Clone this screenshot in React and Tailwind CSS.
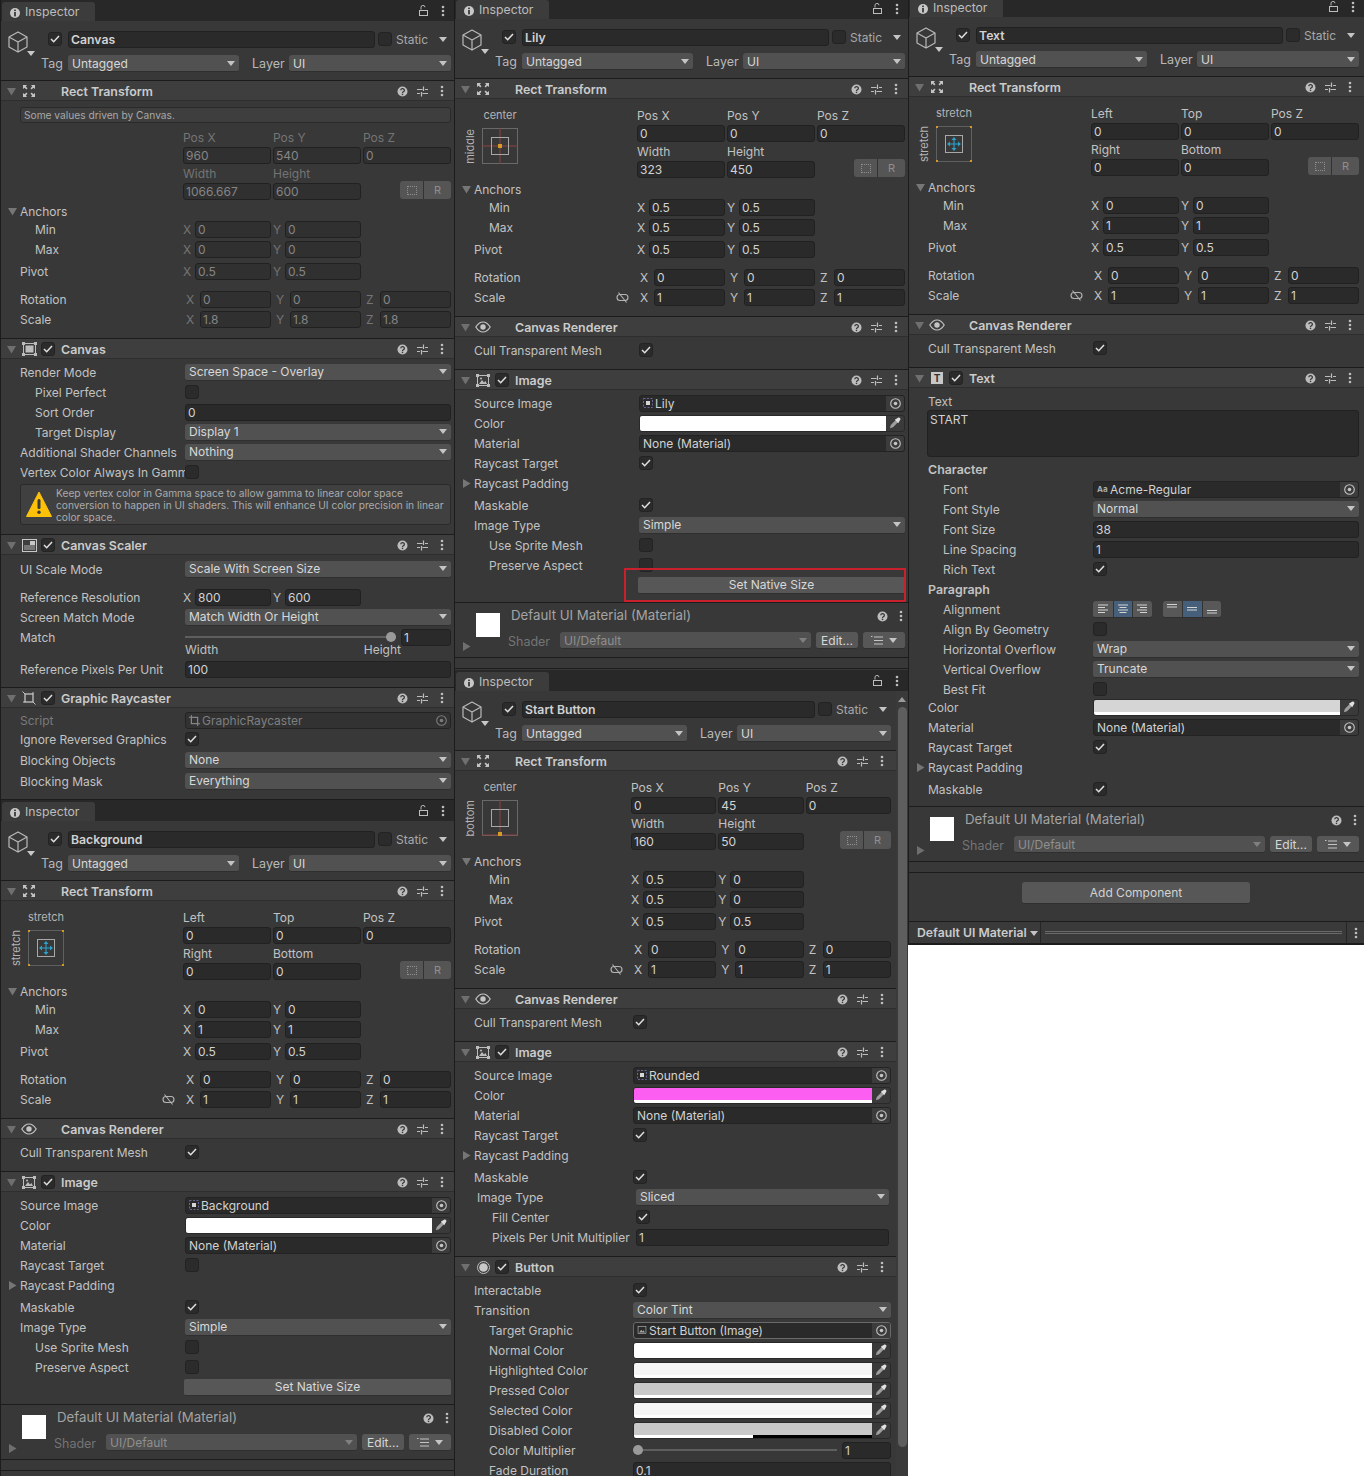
import { createContext, useContext } from "react";

const Ctx = createContext({ lw: "w-[165px]", pr: "pr-[3px]", nameW: "w-[171px]" });
const wide = { lw: "w-[165px]", pr: "pr-[3px]", nameW: "w-[171px]" };
const wideR = { lw: "w-[165px]", pr: "pr-[5px]", nameW: "w-[171px]" };
const narrow = { lw: "w-[159px]", pr: "pr-[5px]", nameW: "w-[165px]" };

const ic = "#bdbdbd";

// ---- icons
function Tri({ down = true, c = "#6f6f6f" }) {
  return (
    <svg width="9" height="9" viewBox="0 0 9 9" className="shrink-0">
      {down ? <polygon points="0,1 9,1 4.5,8.5" fill={c} /> : <polygon points="1,0 8.5,4.5 1,9" fill={c} />}
    </svg>
  );
}
function Arrow({ c = "#c4c4c4" }) {
  return (
    <svg width="8" height="5" viewBox="0 0 8 5" className="shrink-0">
      <polygon points="0,0 8,0 4,5" fill={c} />
    </svg>
  );
}
function Dots() {
  return (
    <svg width="4" height="12" viewBox="0 0 4 12">
      <circle cx="2" cy="2" r="1.3" fill={ic} />
      <circle cx="2" cy="6" r="1.3" fill={ic} />
      <circle cx="2" cy="10" r="1.3" fill={ic} />
    </svg>
  );
}
function Help() {
  return (
    <svg width="11" height="11" viewBox="0 0 11 11">
      <circle cx="5.5" cy="5.5" r="5" fill={ic} />
      <path d="M3.8 4.3a1.8 1.6 0 1 1 2.6 1.4c-.6.4-.9.6-.9 1.2" stroke="#383838" strokeWidth="1.3" fill="none" />
      <rect x="4.8" y="7.7" width="1.4" height="1.4" fill="#383838" />
    </svg>
  );
}
function Sliders() {
  return (
    <svg width="11" height="11" viewBox="0 0 11 11">
      <path d="M0 3.5h5.500M8 3.500h3M0 7.500h3M5.500 7.500h5.500M6.500 .5v4.500M4.500 6v4.500" stroke={ic} strokeWidth="1.200" fill="none" />
    </svg>
  );
}
function Info() {
  return (
    <svg width="10" height="10" viewBox="0 0 10 10" className="shrink-0">
      <circle cx="5" cy="5" r="5" fill="#c8c8c8" />
      <rect x="4.2" y="1.6" width="1.6" height="1.5" fill="#282828" />
      <rect x="4.2" y="4" width="1.6" height="4.4" fill="#282828" />
    </svg>
  );
}
function Lock() {
  return (
    <svg width="9" height="11" viewBox="0 0 9 11">
      <path d="M2 4.5V2.6a2 2 0 0 1 4-.4" stroke={ic} fill="none" />
      <rect x=".5" y="5.5" width="8" height="5" stroke={ic} fill="none" />
    </svg>
  );
}
function Cube() {
  return (
    <div className="relative w-[20px] h-[22px]">
      <svg width="20" height="22" viewBox="0 0 20 22">
        <path d="M10 1 19 6v10l-9 5-9-5V6zM1 6l9 5 9-5M10 11v10" stroke="#b9b9b9" strokeWidth="1.2" fill="none" strokeLinejoin="round" />
      </svg>
      <div className="absolute left-[19px] top-[20px]">
        <Arrow c="#c8c8c8" />
      </div>
    </div>
  );
}
function RectIcon() {
  return (
    <svg width="14" height="14" viewBox="0 0 14 14">
      <path d="M1 1h4L3.8 2.6 5.5 4.3 4.3 5.5 2.6 3.8 1 5zM13 1H9l1.2 1.6-1.700 1.700 1.200 1.200 1.700-1.700L13 5zM1 13h4l-1.200-1.600 1.700-1.700-1.200-1.200-1.700 1.700L1 9zM13 13H9l1.200-1.600-1.700-1.700 1.200-1.200 1.700 1.700L13 9z" fill="#c4c4c4" />
    </svg>
  );
}
function CanvasIcon() {
  return (
    <svg width="15" height="14" viewBox="0 0 15 14">
      <rect x="1.500" y="1.500" width="12" height="11" stroke="#bdbdbd" fill="none" />
      <rect x="3.500" y="3.500" width="8" height="7" fill="#bdbdbd" />
      <path d="M0 0h3v3H0zM12 0h3v3h-3zM0 11h3v3H0zM12 11h3v3h-3z" fill="#bdbdbd" />
    </svg>
  );
}
function ScalerIcon() {
  return (
    <svg width="15" height="13" viewBox="0 0 15 13">
      <rect x=".5" y=".5" width="14" height="12" stroke="#c8c8c8" fill="none" />
      <rect x="8" y="2" width="5" height="4" fill="#c8c8c8" />
      <rect x="2" y="6" width="11" height="5" fill="#777" />
    </svg>
  );
}
function RaycastIcon() {
  return (
    <svg width="14" height="14" viewBox="0 0 14 14">
      <rect x="3" y="3" width="8" height="8" stroke="#c4c4c4" strokeWidth="1.300" fill="none" />
      <path d="M.5 .5 3 3M11 11l2.500 2.500M11 1v2M1 11h2" stroke="#c4c4c4" fill="none" />
    </svg>
  );
}
function EyeIcon() {
  return (
    <svg width="16" height="12" viewBox="0 0 16 12">
      <path d="M.8 6C3 2.500 5.500 1 8 1s5 1.500 7.200 5C13 9.500 10.500 11 8 11S3 9.500.8 6z" stroke="#c4c4c4" strokeWidth="1.200" fill="none" />
      <circle cx="8" cy="6" r="2.700" fill="#c4c4c4" />
    </svg>
  );
}
function ImageIcon() {
  return (
    <svg width="14" height="13" viewBox="0 0 14 13">
      <rect x="1.500" y="1.500" width="11" height="10" stroke="#bdbdbd" fill="none" />
      <path d="M0 0h3v3H0zM11 0h3v3h-3zM0 10h3v3H0zM11 10h3v3h-3z" fill="#bdbdbd" />
      <path d="M3 10 6 6l2 2.500L9.500 7 11 10z" fill="#bdbdbd" />
      <circle cx="5" cy="4.500" r="1" fill="#bdbdbd" />
    </svg>
  );
}
function ButtonIcon() {
  return (
    <svg width="13" height="13" viewBox="0 0 13 13">
      <circle cx="6.500" cy="6.500" r="6" stroke="#bdbdbd" fill="none" />
      <circle cx="6.500" cy="6.500" r="4.300" fill="#c8c8c8" />
    </svg>
  );
}
function TextIcon() {
  return (
    <div className="w-[12px] h-[12px] bg-[#c8c8c8] text-[#333] text-[10px] font-bold leading-[12px] text-center">T</div>
  );
}
function Target() {
  return (
    <svg width="11" height="11" viewBox="0 0 11 11">
      <circle cx="5.500" cy="5.500" r="4.800" stroke="#c4c4c4" strokeWidth="1.100" fill="none" />
      <circle cx="5.500" cy="5.500" r="1.800" fill="#c4c4c4" />
    </svg>
  );
}
function Dropper() {
  return (
    <svg width="12" height="12" viewBox="0 0 12 12">
      <path d="M.8 11.200l1-3.200 4.700-4.700 2.200 2.200-4.700 4.700z" fill="#9e9e9e" />
      <path d="M5.800 2.800 9 .8c.7-.5 1.500-.4 2 .2s.6 1.300.1 2L9.200 6.200z" fill="#e0e0e0" />
    </svg>
  );
}
function Unlink() {
  return (
    <svg width="13" height="11" viewBox="0 0 13 11">
      <rect x="1" y="2.500" width="11" height="6" rx="3" stroke="#b4b4b4" strokeWidth="1.100" fill="none" />
      <path d="M2.500 .5l8 10" stroke="#b4b4b4" strokeWidth="1.100" fill="none" />
    </svg>
  );
}
function SpriteIcon() {
  return (
    <svg width="10" height="10" viewBox="0 0 10 10" className="shrink-0">
      <rect x=".5" y=".5" width="9" height="9" stroke="#6a6598" strokeDasharray="2 1.500" fill="none" />
      <rect x="3" y="3" width="4" height="4" fill="#d6d6d6" />
    </svg>
  );
}
function SmallRaycast() {
  return (
    <svg width="11" height="11" viewBox="0 0 14 14" className="shrink-0">
      <rect x="3" y="3" width="8" height="8" stroke="#8a8a8a" strokeWidth="1.500" fill="none" />
      <path d="M3 0v3M0 3h3M11 11v3M11 11h3" stroke="#8a8a8a" strokeWidth="1.300" fill="none" />
    </svg>
  );
}
function MiniImage() {
  return (
    <svg width="10" height="10" viewBox="0 0 14 13" className="shrink-0">
      <rect x="1.500" y="1.500" width="11" height="10" stroke="#a8a8a8" fill="none" />
      <path d="M3 10 6 6l2 2.500L9.500 7 11 10z" fill="#a8a8a8" />
    </svg>
  );
}
function ListIcon() {
  return (
    <svg width="12" height="9" viewBox="0 0 12 9">
      <path d="M3 1h9M3 4.500h9M3 8h9M0 .5h1.500" stroke="#c4c4c4" fill="none" />
    </svg>
  );
}
function Warn() {
  return (
    <svg width="26" height="27" viewBox="0 0 26 27" className="shrink-0">
      <path d="M13 1 25.500 25.500H.5z" fill="#fdc10a" stroke="#fdc10a" strokeLinejoin="round" />
      <rect x="11.500" y="8" width="3" height="10" rx="1.500" fill="#3a3a3a" />
      <circle cx="13" cy="21.300" r="1.700" fill="#3a3a3a" />
    </svg>
  );
}

// ---- controls
function Check({ on }) {
  return (
    <div className="w-[14px] h-[14px] shrink-0 rounded-[3px] bg-[#2b2b2b] border border-[#232323] flex items-center justify-center">
      {on && (
        <svg width="10" height="8" viewBox="0 0 10 8">
          <path d="M1 4l2.700 2.700L9 1" stroke="#e0e0e0" strokeWidth="1.500" fill="none" />
        </svg>
      )}
    </div>
  );
}
function Field({ children, dim, bold, className = "" }) {
  return (
    <div className={`h-[17px] rounded-[3px] bg-[#2a2a2a] border border-[#212121] pl-[2px] flex items-center overflow-hidden ${dim ? "text-[#858585] bg-[#303030]" : "text-[#d2d2d2]"} ${bold ? "font-semibold text-[12.25px] pt-[2px]" : "pt-px"} ${className}`}>
      {children}
    </div>
  );
}
function Dropdown({ children, dim, className = "flex-1" }) {
  return (
    <div className={`h-[17px] rounded-[3px] bg-[#515151] border-b border-[#2f2f2f] pl-[4px] pr-[4px] flex items-center justify-between ${dim ? "text-[#8f8f8f] bg-[#484848]" : "text-[#d8d8d8]"} ${className}`}>
      <span className="pt-px">{children}</span>
      <Arrow c={dim ? "#7f7f7f" : "#c4c4c4"} />
    </div>
  );
}
function ObjectField({ icon, children, dim, lightBorder }) {
  return (
    <div className={`flex-1 h-[17px] rounded-[3px] bg-[#2a2a2a] border ${lightBorder ? "border-[#6a6a6a]" : "border-[#232323]"} flex items-center overflow-hidden ${dim ? "text-[#7f7f7f] bg-[#323232]" : "text-[#d2d2d2]"}`}>
      <div className="flex-1 flex items-center gap-[2px] pl-[3px]">
        {icon}
        <span className="pt-px">{children}</span>
      </div>
      <div className={`w-[18px] h-full flex items-center justify-center ${dim ? "opacity-50" : "bg-[#3c3c3c]"}`}>
        <Target />
      </div>
    </div>
  );
}
function ColorField({ bar = "bg-white", strip = "white" }) {
  return (
    <div className="flex-1 h-[17px] rounded-[3px] border border-[#292929] flex overflow-hidden bg-[#3a3a3a]">
      <div className="flex-1 flex flex-col">
        <div className={`flex-1 ${bar}`}></div>
        {strip === "half" ? (
          <div className="h-[3px] flex">
            <div className="w-1/2 bg-white"></div>
            <div className="w-1/2 bg-black"></div>
          </div>
        ) : (
          <div className="h-[3px] bg-white"></div>
        )}
      </div>
      <div className="w-[18px] flex items-center justify-center">
        <Dropper />
      </div>
    </div>
  );
}
function Slider({ right, value, wClass }) {
  return (
    <div className="flex-1 flex items-center gap-[5px]">
      <div className="flex-1 h-[12px] relative flex items-center">
        <div className="w-full h-[2px] bg-[#5e5e5e]"></div>
        <div className={`absolute top-[1px] w-[10px] h-[10px] rounded-full bg-[#9a9a9a] ${right ? "right-0" : "left-0"}`}></div>
      </div>
      <Field className={wClass}>{value}</Field>
    </div>
  );
}

// ---- rows
function Row({ label, indent, fold, dim, extra, h = "h-5", className = "", children }) {
  const { lw, pr } = useContext(Ctx);
  return (
    <div className={`${h} flex items-center pl-[19px] ${pr} ${className}`}>
      {fold && (
        <div className="-ml-[12px] w-[12px]">
          <Tri down={fold === "down"} c="#767676" />
        </div>
      )}
      <div className={`${lw} h-full shrink-0 flex items-center justify-between overflow-hidden ${dim ? "text-[#7a7a7a]" : "text-[#c2c2c2]"} ${indent ? "pl-[15px]" : ""}`}>
        <span className="pt-px">{label}</span>
        {extra}
      </div>
      <div className="flex-1 flex items-center min-w-0">{children}</div>
    </div>
  );
}
function Xy({ dim, x, y }) {
  return (
    <div className="grid grid-cols-3 gap-[2px] -ml-[2px] w-[calc(100%+2px)]">
      {[["X", x], ["Y", y]].map(([l, v]) => (
        <div key={l} className="flex items-center">
          <span className={`w-[12px] pt-px shrink-0 ${dim ? "text-[#747474]" : "text-[#c2c2c2]"}`}>{l}</span>
          <Field dim={dim} className="flex-1">{v}</Field>
        </div>
      ))}
    </div>
  );
}
function Xyz({ dim, v }) {
  return (
    <div className="grid grid-cols-3 gap-[5px] pl-px w-full">
      {["X", "Y", "Z"].map((l) => (
        <div key={l} className="flex items-center">
          <span className={`w-[14px] pt-px shrink-0 ${dim ? "text-[#747474]" : "text-[#c2c2c2]"}`}>{l}</span>
          <Field dim={dim} className="flex-1">{v}</Field>
        </div>
      ))}
    </div>
  );
}
function Section({ icon, check, title, children }) {
  const { pr } = useContext(Ctx);
  return (
    <div>
      <div className="h-px bg-[#1c1c1c]"></div>
      <div className={`h-5 bg-[#3e3e3e] border-b border-[#2e2e2e] flex items-center pl-[6px] pt-px ${pr}`}>
        <div className="w-[9px]"><Tri /></div>
        <div className="w-[16px] ml-[5px] flex justify-center">{icon}</div>
        <div className="w-[14px] ml-[4px]">{check !== undefined && <Check on={check} />}</div>
        <div className="ml-[6px] pt-[2px] flex-1 font-semibold text-[12.4px] text-[#cbcbcb]">{title}</div>
        <div className="flex items-center -mr-px">
          <div className="w-5 flex justify-center"><Help /></div>
          <div className="w-5 flex justify-center"><Sliders /></div>
          <div className="w-5 flex justify-center"><Dots /></div>
        </div>
      </div>
      {children}
    </div>
  );
}

// ---- anchor widget
function Preset({ kind }) {
  return (
    <svg width="36" height="36" viewBox="0 0 36 36" className="shrink-0">
      {kind === "stretch" ? (
        <rect x=".5" y=".5" width="35" height="35" stroke="#5f5f5f" fill="none" />
      ) : (
        <rect x=".5" y=".5" width="35" height="35" stroke="#696969" fill="none" />
      )}
      {kind === "middle" && <path d="M18 0v36M0 18h36" stroke="#8c4242" fill="none" />}
      {kind === "bottom" && <path d="M18 0v36M0 35h36" stroke="#8c4242" fill="none" />}
      <rect x="9.500" y="9.500" width="17" height="17" stroke="#a8a8a8" fill="none" />
      {kind === "middle" && <rect x="16" y="16" width="4" height="4" fill="#d69a27" />}
      {kind === "bottom" && <rect x="16" y="32" width="4" height="4" fill="#d69a27" />}
      {kind === "stretch" && (
        <g>
          <path d="M0 0h2v2H0zM34 0h2v2h-2zM0 34h2v2H0zM34 34h2v2h-2z" fill="#d69a27" />
          <path d="M18 13v10M13 18h10" stroke="#2ea1c9" strokeWidth="1.100" />
          <path d="M18 11l-2.500 3h5zM18 25l-2.500-3h5zM11 18l3-2.500v5zM25 18l-3-2.500v5z" fill="#2ea1c9" />
        </g>
      )}
    </svg>
  );
}
function RectBlock({ kind, top, side, dim, labels, values }) {
  const { lw, pr } = useContext(Ctx);
  const lc = dim ? "text-[#747474]" : "text-[#c2c2c2]";
  return (
    <div className={`flex pl-[19px] ${pr}`}>
      <div className={`${lw} shrink-0`}>
        {kind && (
          <div className="-ml-[10px]">
            <div className="h-[18px] pl-[16px] flex items-center text-[11px] text-[#b4b4b4] w-[56px] justify-center">{top}</div>
            <div className="flex items-center mt-[4px]">
              <div className="w-[12px] mr-[6px] h-[36px] flex items-center justify-center">
                <span className="[writing-mode:vertical-rl] rotate-180 text-[11px] text-[#b4b4b4]">{side}</span>
              </div>
              <Preset kind={kind} />
            </div>
          </div>
        )}
      </div>
      <div className="flex-1 -ml-[2px] grid grid-cols-3 gap-x-[2px]">
        {labels.slice(0, 3).map((l) => (
          <div key={l} className={`h-[18px] pt-[2px] flex items-center ${lc}`}>{l}</div>
        ))}
        {values.slice(0, 3).map((v, i) => (
          <div key={i} className="h-[18px] pt-px">
            <Field dim={dim}>{v}</Field>
          </div>
        ))}
        {labels.slice(3).map((l) => (
          <div key={l} className={`h-[18px] pt-[2px] flex items-center ${lc}`}>{l}</div>
        ))}
        <div className="h-[18px]"></div>
        {values.slice(3).map((v, i) => (
          <div key={i} className="h-[18px] pt-px">
            <Field dim={dim}>{v}</Field>
          </div>
        ))}
        <div className="h-[18px] -mt-[1px] flex justify-end">
          <div className="w-[51px] h-[18px] rounded-[3px] flex overflow-hidden text-[#8f8f8f] text-[11px]">
            <div className="w-[24px] bg-[#555] border-r border-[#333] flex items-center justify-center">
              <div className="w-[10px] h-[9px] border border-dotted border-[#8f8f8f]"></div>
            </div>
            <div className="flex-1 bg-[#555] flex items-center justify-center">R</div>
          </div>
        </div>
      </div>
    </div>
  );
}
function RectTransform({ driven, kind, top, side, labels, values, ax = "0", ay = "0", bx = "0", by = "0", px = "0.5", py = "0.5", s = "1" }) {
  const { pr } = useContext(Ctx);
  return (
    <Section icon={<RectIcon />} title="Rect Transform">
      {driven ? (
        <div className={`pl-[19px] ${pr} mt-[6px] mb-[5px]`}>
          <div className="h-[16px] rounded-[3px] bg-[#3e3e3e] border border-[#2a2a2a] pl-[3px] flex items-center text-[10.2px] text-[#a8a8a8]">
            Some values driven by Canvas.
          </div>
        </div>
      ) : (
        <div className="h-[7px]"></div>
      )}
      <RectBlock dim={driven} kind={kind} top={top} side={side} labels={labels} values={values} />
      <Row label="Anchors" fold="down" h="h-[17px]" className="mt-[2px] pt-px"></Row>
      <Row label="Min" indent><Xy dim={driven} x={ax} y={ay} /></Row>
      <Row label="Max" indent><Xy dim={driven} x={bx} y={by} /></Row>
      <Row label="Pivot" className="mt-[2px]"><Xy dim={driven} x={px} y={py} /></Row>
      <Row label="Rotation" className="mt-[8px]"><Xyz dim={driven} v="0" /></Row>
      <Row
        label="Scale"
        extra={!driven && <div className="pr-[10px]"><Unlink /></div>}
        className="mb-[9px]"
      >
        <Xyz dim={driven} v={s} />
      </Row>
    </Section>
  );
}
function CanvasRendererSec() {
  return (
    <Section icon={<EyeIcon />} title="Canvas Renderer">
      <Row label="Cull Transparent Mesh" className="mt-[3px] mb-[9px]"><Check on /></Row>
    </Section>
  );
}
function ImageTop({ source, color, rt, type, shift }) {
  return (
    <>
      <Row label="Source Image" className="mt-[3px]"><ObjectField icon={<SpriteIcon />}>{source}</ObjectField></Row>
      <Row label="Color"><ColorField bar={color} /></Row>
      <Row label="Material"><ObjectField>None (Material)</ObjectField></Row>
      <Row label="Raycast Target"><Check on={rt} /></Row>
      <Row label="Raycast Padding" fold="right"></Row>
      <Row label="Maskable" className="mt-[2px]"><Check on /></Row>
      <div className={shift ? "pl-[3px] pr-[2px]" : ""}>
        <Row label="Image Type"><Dropdown>{type}</Dropdown></Row>
      </div>
    </>
  );
}
function NativeBtn({ mark }) {
  return (
    <Row className="mb-[7px]">
      <div className="relative flex-1 -ml-px h-[17px] rounded-[2px] bg-[#575757] border-b border-[#2f2f2f] pt-px flex items-center justify-center text-[#d8d8d8]">
        Set Native Size
        {mark && <div className="absolute -left-[14px] -top-[9px] w-[282px] h-[34px] border-2 border-[#c9202e]"></div>}
      </div>
    </Row>
  );
}
function Material({ tail = true }) {
  const { pr } = useContext(Ctx);
  return (
    <div>
      <div className="h-px bg-[#1c1c1c]"></div>
      <div className={`h-[54px] flex pl-[7px] ${pr}`}>
        <div className="w-[13px] pt-[39px]"><Tri down={false} c="#6f6f6f" /></div>
        <div className="ml-px mt-[10px] w-[24px] h-[24px] bg-white shrink-0"></div>
        <div className="flex-1 ml-[8px] min-w-0">
          <div className="h-[26px] flex items-center pl-[3px] justify-between text-[#a4a4a4] text-[13.25px]">
            <span>Default UI Material (Material)</span>
            <div className="flex items-center pr-[2px] gap-[11px]"><Help /><Dots /></div>
          </div>
          <div className="flex items-center mt-[3px]">
            <span className="w-[52px] text-[#747474] pt-[3px] text-[12.5px]">Shader</span>
            <Dropdown dim>UI/Default</Dropdown>
            <div className="ml-[5px] w-[42px] h-[17px] rounded-[3px] bg-[#575757] border-b border-[#2f2f2f] text-[#d8d8d8] pt-px flex items-center justify-center">Edit...</div>
            <div className="ml-[5px] w-[42px] h-[17px] rounded-[3px] bg-[#575757] border-b border-[#2f2f2f] flex items-center justify-between px-[8px]">
              <ListIcon />
              <Arrow />
            </div>
          </div>
        </div>
      </div>
      <div className="h-px bg-[#1c1c1c]"></div>
      <div className="h-[10px]"></div>
      <div className="h-px bg-[#1c1c1c]"></div>
      {tail && <div className="h-px"></div>}
    </div>
  );
}
function Window({ children }) {
  return (
    <div>
      <div className="h-[21px] bg-[#282828] pt-[2px] pr-[9px] flex justify-between">
        <div className="w-[93px] ml-px h-[19px] rounded-t-[3px] bg-[#3c3c3c] flex items-center pl-[8px] pt-[2px] gap-[5px] text-[#bdbdbd] text-[12.25px]">
          <Info />
          Inspector
        </div>
        <div className="flex items-center gap-[13px] pb-[2px]">
          <Lock />
          <Dots />
        </div>
      </div>
      {children}
    </div>
  );
}
function GoHeader({ name, on = true }) {
  const { pr, nameW } = useContext(Ctx);
  return (
    <div className={`h-[59px] flex pl-[7px] ${pr}`}>
      <div className="w-[33px] pt-[10px] shrink-0"><Cube /></div>
      <div className="flex-1 min-w-0">
        <div className="mt-[9px] h-[18px] flex items-center pl-[7px]">
          <Check on={on} />
          <Field bold className="flex-1 ml-[6px]">{name}</Field>
          <div className="ml-[3px]"><Check /></div>
          <span className="ml-[4px] w-[43px] pt-[2px] text-[#a8a8a8]">Static</span>
          <div className="w-[12px]"><Arrow /></div>
        </div>
        <div className="mt-[7px] flex items-center">
          <span className="w-[27px] text-[#b8b8b8] text-[12.5px] pt-px">Tag</span>
          <Dropdown className={nameW}>Untagged</Dropdown>
          <span className="ml-[13px] w-[37px] text-[#b8b8b8] text-[12.5px] pt-px">Layer</span>
          <Dropdown>UI</Dropdown>
        </div>
      </div>
    </div>
  );
}

const posL = ["Pos X", "Pos Y", "Pos Z", "Width", "Height"];
const strL = ["Left", "Top", "Pos Z", "Right", "Bottom"];

function Column1() {
  return (
    <Ctx.Provider value={wide}>
      <div className="w-[454px] shrink-0 h-[1476px] border-l border-[#1c1c1c] bg-[#383838] overflow-hidden">
        <Window>
          <GoHeader name="Canvas" />
          <RectTransform driven labels={posL} values={["960", "540", "0", "1066.667", "600"]} s="1.8" />
          <Section icon={<CanvasIcon />} check title="Canvas">
            <Row label="Render Mode" className="mt-[3px]"><Dropdown>Screen Space - Overlay</Dropdown></Row>
            <Row label="Pixel Perfect" indent><Check /></Row>
            <Row label="Sort Order" indent><Field className="flex-1">0</Field></Row>
            <Row label="Target Display" indent><Dropdown>Display 1</Dropdown></Row>
            <Row label="Additional Shader Channels"><Dropdown>Nothing</Dropdown></Row>
            <Row label="Vertex Color Always In Gamma Space"><Check /></Row>
            <div className="pl-[19px] pr-[3px] mt-[2px] mb-[9px]">
              <div className="h-[41px] rounded-[3px] bg-[#404040] border border-[#2a2a2a] flex items-center pl-[5px] gap-[4px] text-[10.2px] leading-[12px] text-[#ababab]">
                <Warn />
                <div>
                  Keep vertex color in Gamma space to allow gamma to linear color space
                  <br />
                  conversion to happen in UI shaders. This will enhance UI color precision in linear
                  <br />
                  color space.
                </div>
              </div>
            </div>
          </Section>
          <Section icon={<ScalerIcon />} check title="Canvas Scaler">
            <Row label="UI Scale Mode" className="mt-[4px]"><Dropdown>Scale With Screen Size</Dropdown></Row>
            <Row label="Reference Resolution" h="h-[19px]" className="mt-[9px]"><Xy x="800" y="600" /></Row>
            <Row label="Screen Match Mode"><Dropdown>Match Width Or Height</Dropdown></Row>
            <Row label="Match"><Slider right value="1" wClass="w-[50px]" /></Row>
            <Row h="h-[14px]" className="-mt-[4px]">
              <div className="w-[216px] flex justify-between text-[#c2c2c2]"><span>Width</span><span>Height</span></div>
            </Row>
            <Row label="Reference Pixels Per Unit" className="mt-[2px] mb-[8px]"><Field className="flex-1">100</Field></Row>
          </Section>
          <Section icon={<RaycastIcon />} check title="Graphic Raycaster">
            <Row label="Script" dim h="h-[18px]" className="mt-[3px]">
              <ObjectField dim icon={<SmallRaycast />}>GraphicRaycaster</ObjectField>
            </Row>
            <Row label="Ignore Reversed Graphics"><Check on /></Row>
            <Row label="Blocking Objects" className="mt-px"><Dropdown>None</Dropdown></Row>
            <Row label="Blocking Mask" className="mt-px mb-[8px]"><Dropdown>Everything</Dropdown></Row>
          </Section>
          <div className="h-px bg-[#1c1c1c]"></div>
        </Window>
        <Window>
          <GoHeader name="Background" />
          <RectTransform kind="stretch" top="stretch" side="stretch" labels={strL} values={["0", "0", "0", "0", "0"]} bx="1" by="1" />
          <CanvasRendererSec />
          <Section icon={<ImageIcon />} check title="Image">
            <ImageTop source="Background" color="bg-white" rt={false} type="Simple" />
            <Row label="Use Sprite Mesh" indent><Check /></Row>
            <Row label="Preserve Aspect" indent><Check /></Row>
            <NativeBtn />
          </Section>
          <Material />
        </Window>
      </div>
    </Ctx.Provider>
  );
}

function Column2() {
  return (
    <div className="w-[454px] shrink-0 h-[1478px] -mt-[2px] border-l border-[#1c1c1c] bg-[#383838] overflow-hidden">
      <Ctx.Provider value={wide}>
        <Window>
          <GoHeader name="Lily" />
          <RectTransform kind="middle" top="center" side="middle" labels={posL} values={["0", "0", "0", "323", "450"]} ax="0.5" ay="0.5" bx="0.5" by="0.5" />
          <CanvasRendererSec />
          <Section icon={<ImageIcon />} check title="Image">
            <ImageTop source="Lily" color="bg-white" rt type="Simple" />
            <Row label="Use Sprite Mesh" indent><Check /></Row>
            <Row label="Preserve Aspect" indent><Check /></Row>
            <NativeBtn mark />
          </Section>
          <Material />
        </Window>
      </Ctx.Provider>
      <Ctx.Provider value={narrow}>
        <Window>
          <div className="flex">
            <div className="flex-1 min-w-0">
              <GoHeader name="Start Button" />
              <RectTransform kind="bottom" top="center" side="bottom" labels={posL} values={["0", "45", "0", "160", "50"]} ax="0.5" bx="0.5" />
              <CanvasRendererSec />
              <Section icon={<ImageIcon />} check title="Image">
                <ImageTop source="Rounded" color="bg-[#fb5ef0]" rt type="Sliced" shift />
                <div className="pl-[3px] pr-[2px] mb-[9px]">
                  <Row label="Fill Center" indent><Check on /></Row>
                  <Row label="Pixels Per Unit Multiplier" indent><Field className="flex-1">1</Field></Row>
                </div>
              </Section>
              <Section icon={<ButtonIcon />} check title="Button">
                <Row label="Interactable" className="mt-[3px]"><Check on /></Row>
                <Row label="Transition"><Dropdown>Color Tint</Dropdown></Row>
                <Row label="Target Graphic" indent><ObjectField lightBorder icon={<MiniImage />}>Start Button (Image)</ObjectField></Row>
                <Row label="Normal Color" indent><ColorField /></Row>
                <Row label="Highlighted Color" indent><ColorField bar="bg-[#f5f5f5]" /></Row>
                <Row label="Pressed Color" indent><ColorField bar="bg-[#c8c8c8]" /></Row>
                <Row label="Selected Color" indent><ColorField bar="bg-[#f5f5f5]" /></Row>
                <Row label="Disabled Color" indent><ColorField bar="bg-[#c8c8c8]" strip="half" /></Row>
                <Row label="Color Multiplier" indent><Slider value="1" wClass="w-[49px]" /></Row>
                <Row label="Fade Duration" indent><Field className="flex-1">0.1</Field></Row>
              </Section>
            </div>
            <div className="w-[12px] shrink-0 flex flex-col items-center bg-[#3a3a3a]">
              <div className="h-[16px] flex items-center">
                <svg width="8" height="5" viewBox="0 0 8 5"><polygon points="4,0 8,5 0,5" fill="#9a9a9a" /></svg>
              </div>
              <div className="w-[9px] h-[740px] rounded-full bg-[#5e5e5e]"></div>
            </div>
          </div>
        </Window>
      </Ctx.Provider>
    </div>
  );
}

function AlignIcon({ kind }) {
  const d = {
    l: "M0 1h10M0 3.500h7M0 6h10M0 8.500h7",
    c: "M0 1h10M1.500 3.500h7M0 6h10M1.500 8.500h7",
    r: "M0 1h10M3 3.500h7M0 6h10M3 8.500h7",
    t: "M0 .5h10M0 3h10",
    m: "M0 3.500h10M0 6h10",
    b: "M0 6.500h10M0 9h10",
  }[kind];
  return (
    <svg width="10" height="10" viewBox="0 0 10 10">
      <path d={d} stroke="#d4d4d4" fill="none" />
    </svg>
  );
}
function AlignGroup({ items, active }) {
  return (
    <div className="h-[17px] rounded-[3px] flex overflow-hidden border-b border-[#2f2f2f]">
      {items.map((it, i) => (
        <div key={it} className={`w-[19.5px] h-full flex items-center justify-center ${i === active ? "bg-[#46607c]" : "bg-[#585858]"} ${i > 0 ? "border-l border-[#333]" : ""}`}>
          <AlignIcon kind={it} />
        </div>
      ))}
    </div>
  );
}

function Column3() {
  return (
    <Ctx.Provider value={wideR}>
      <div className="w-[456px] shrink-0 self-start -mt-[4px] border-l border-[#1c1c1c] bg-[#383838]">
        <Window>
          <GoHeader name="Text" />
          <RectTransform kind="stretch" top="stretch" side="stretch" labels={strL} values={["0", "0", "0", "0", "0"]} bx="1" by="1" />
          <CanvasRendererSec />
          <Section icon={<TextIcon />} check title="Text">
            <Row label="Text" h="h-[18px]" className="mt-[4px]"></Row>
            <div className="pl-[18px] pr-[5px]">
              <div className="h-[47px] rounded-[3px] bg-[#2a2a2a] border border-[#212121] px-[2px] pt-[3px] text-[#d2d2d2]">START</div>
            </div>
            <Row label={<b className="font-semibold text-[12.4px] block pt-px">Character</b>} className="mt-[2px]"></Row>
            <Row label="Font" indent>
              <ObjectField icon={<span className="text-[8px] font-bold text-[#aaa] w-[11px]">Aa</span>}>Acme-Regular</ObjectField>
            </Row>
            <Row label="Font Style" indent><Dropdown>Normal</Dropdown></Row>
            <Row label="Font Size" indent><Field className="flex-1">38</Field></Row>
            <Row label="Line Spacing" indent><Field className="flex-1">1</Field></Row>
            <Row label="Rich Text" indent><Check on /></Row>
            <Row label={<b className="font-semibold text-[12.4px] block pt-px">Paragraph</b>}></Row>
            <Row label="Alignment" indent>
              <AlignGroup items={["l", "c", "r"]} active={1} />
              <div className="w-[11px]"></div>
              <AlignGroup items={["t", "m", "b"]} active={1} />
            </Row>
            <Row label="Align By Geometry" indent><Check /></Row>
            <Row label="Horizontal Overflow" indent><Dropdown>Wrap</Dropdown></Row>
            <Row label="Vertical Overflow" indent><Dropdown>Truncate</Dropdown></Row>
            <Row label="Best Fit" indent><Check /></Row>
            <Row label="Color" className="-mt-[2px]"><ColorField bar="bg-[#d5d5d5]" /></Row>
            <Row label="Material"><ObjectField>None (Material)</ObjectField></Row>
            <Row label="Raycast Target"><Check on /></Row>
            <Row label="Raycast Padding" fold="right"></Row>
            <Row label="Maskable" className="mt-[2px] mb-[7px]"><Check on /></Row>
          </Section>
          <Material tail={false} />
          <div className="h-[48px] pt-[9px] flex justify-center pr-[1px]">
            <div className="w-[228px] h-[22px] rounded-[3px] bg-[#575757] border-b border-[#2f2f2f] flex items-center justify-center text-[#d2d2d2]">Add Component</div>
          </div>
          <div className="h-px bg-[#1c1c1c]"></div>
          <div className="h-[21px] flex items-center bg-[#3a3a3a]">
            <div className="w-[132px] h-full border-r border-[#262626] pl-[8px] pt-[2px] flex items-center gap-[3px] font-semibold text-[12.25px] text-[#cbcbcb]">
              Default UI Material
              <Arrow />
            </div>
            <div className="flex-1 mx-[4px] h-[3px] border-y border-[#6a6a6a]"></div>
            <div className="w-[18px] h-full border-l border-[#262626] flex items-center justify-center"><Dots /></div>
          </div>
          <div className="h-[2px] bg-[#1c1c1c]"></div>
        </Window>
      </div>
    </Ctx.Provider>
  );
}

export default function App() {
  return (
    <div className="w-[1364px] h-[1476px] overflow-hidden bg-white flex text-[12px] leading-none whitespace-nowrap [font-family:Inter,sans-serif] antialiased">
      <Column1 />
      <Column2 />
      <Column3 />
    </div>
  );
}
